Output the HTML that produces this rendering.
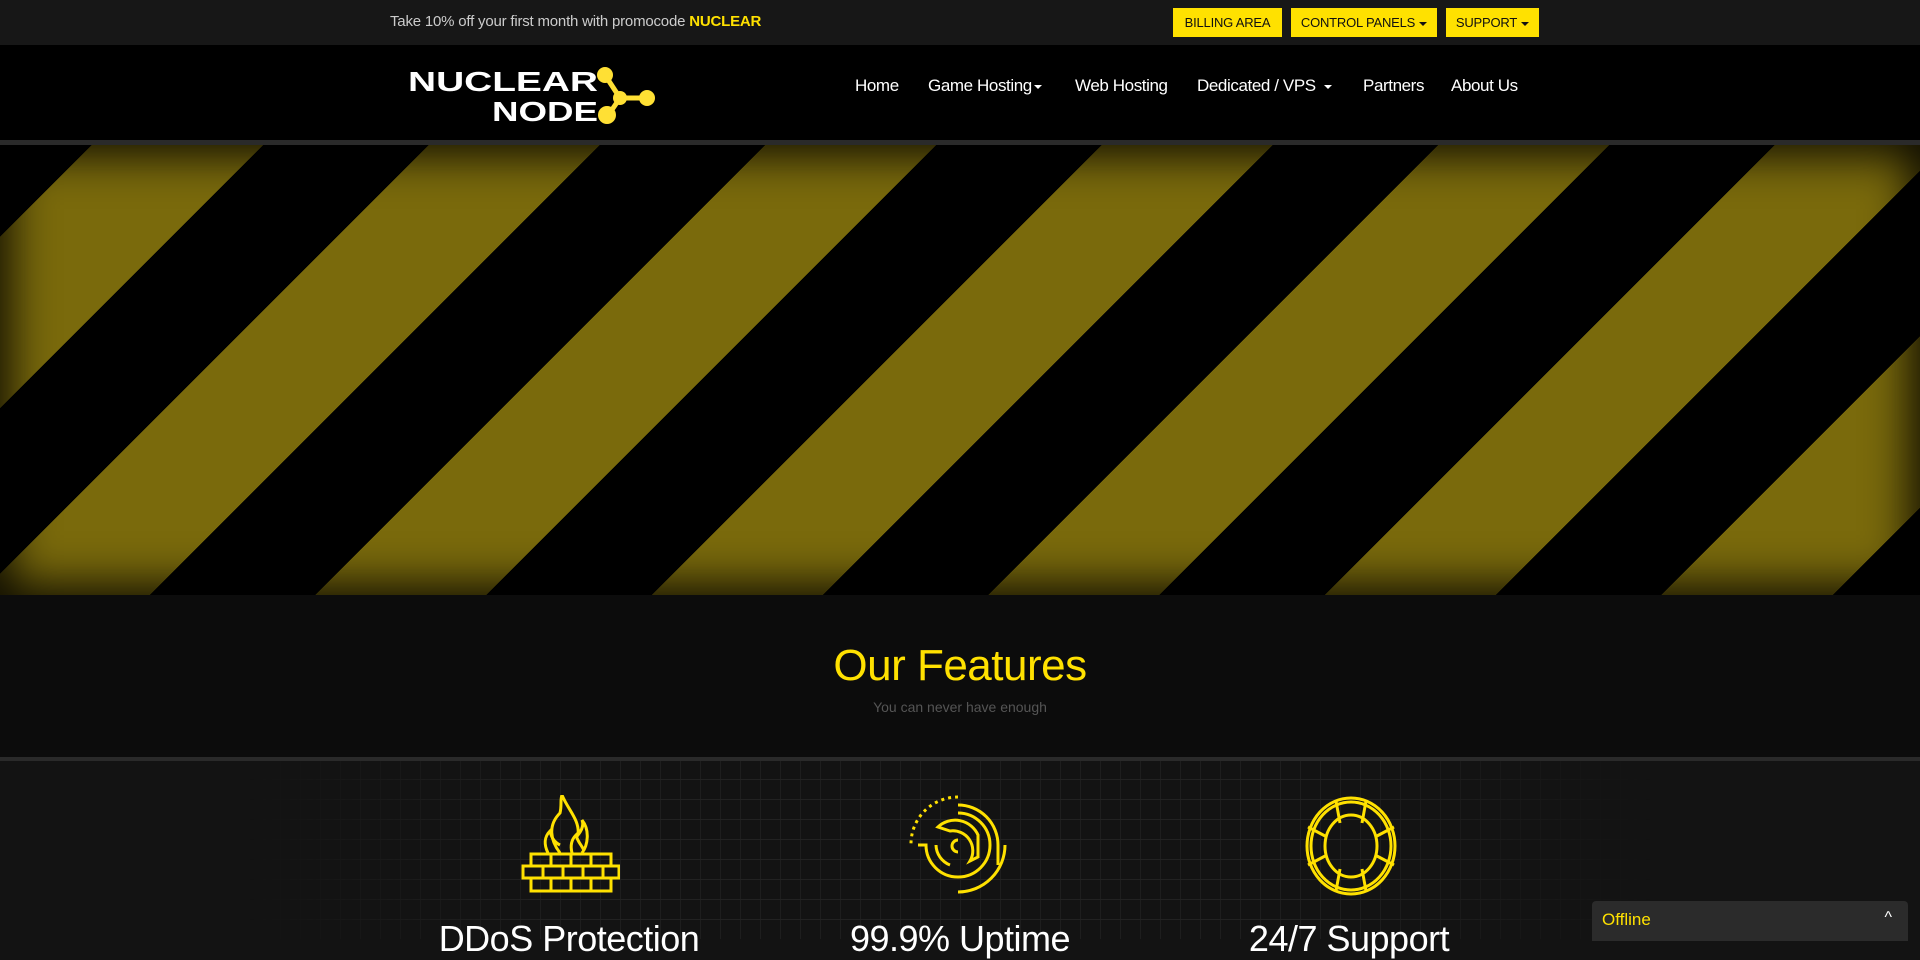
<!DOCTYPE html>
<html><head><meta charset="utf-8"><style>
*{margin:0;padding:0;box-sizing:border-box}
body{width:1920px;height:939px;overflow:hidden;background:#131313;font-family:"Liberation Sans",sans-serif;position:relative}
.top{position:absolute;left:0;top:0;width:1920px;height:45px;background:#171717}
.top .promo{position:absolute;left:390px;top:13px;color:#ccc;font-size:15px;letter-spacing:-0.2px}
.top .promo b{color:#ffe100}
.btn{position:absolute;top:8px;height:29px;background:#ffe100;color:#111;font-size:13px;line-height:29px;white-space:nowrap;text-align:center;letter-spacing:-0.2px}
.car{display:inline-block;width:0;height:0;border-left:4px solid transparent;border-right:4px solid transparent;border-top:4px solid currentColor;vertical-align:middle;margin-left:4px}
.hdr{position:absolute;left:0;top:45px;width:1920px;height:95px;background:#000}
.bar{position:absolute;left:0;top:140px;width:1920px;height:5px;background:#2a2a2a}
.nav a{position:absolute;top:31px;color:#fff;font-size:17px;text-decoration:none;letter-spacing:-0.4px;white-space:nowrap}
.hero{position:absolute;left:0;top:145px;width:1920px;height:450px;
background:repeating-linear-gradient(135deg,#000 0,#000 65px,#7a6a0c 65px,#7a6a0c 186px,#000 186px,#000 238px);}
.hero:after{content:"";position:absolute;inset:0;box-shadow:inset 0 0 45px 10px rgba(0,0,0,.9)}
.feat{position:absolute;left:0;top:595px;width:1920px;height:162px;background:#0c0c0c;text-align:center}
.feat h2{font-weight:normal;color:#ffe100;font-size:44px;margin-top:46px;letter-spacing:-0.5px}
.feat p{color:#555;font-size:14px;margin-top:8px}
.sep{position:absolute;left:0;top:757px;width:1920px;height:4px;background:#2a2a2a}
.grid{position:absolute;left:0;top:761px;width:1920px;height:178px;
background-image:linear-gradient(#222 1px,transparent 1px),linear-gradient(90deg,#1e1e1e 1px,transparent 1px);background-size:20px 20px;background-position:0 18px;
-webkit-mask-image:linear-gradient(90deg,transparent 250px,#000 550px,#000 1350px,transparent 1650px);mask-image:linear-gradient(90deg,transparent 250px,#000 550px,#000 1350px,transparent 1650px)}
.ttl{position:absolute;top:918px;color:#fff;font-size:36px;width:400px;text-align:center;letter-spacing:-0.5px;white-space:nowrap}
.off{position:absolute;left:1592px;top:901px;width:316px;height:40px;background:#2b2b2b;border-radius:4px 4px 0 0;color:#ffe100;font-size:17px;padding:9px 10px}
.off span{position:absolute;right:16px;top:8px;color:#fff;font-size:16px}
</style></head><body>
<div class="top">
<div class="promo">Take 10% off your first month with promocode <b>NUCLEAR</b></div>
<div class="btn" style="left:1173px;width:109px">BILLING AREA</div>
<div class="btn" style="left:1291px;width:146px">CONTROL PANELS<span class="car"></span></div>
<div class="btn" style="left:1446px;width:93px">SUPPORT<span class="car"></span></div>
</div>
<div class="hdr">
<svg style="position:absolute;left:405px;top:20px" width="260" height="60" viewBox="0 0 260 60">
<text x="3" y="26" fill="#fff" font-family="Liberation Sans" font-weight="bold" font-size="28" textLength="190" lengthAdjust="spacingAndGlyphs">NUCLEAR</text>
<text x="87" y="56" fill="#fff" font-family="Liberation Sans" font-weight="bold" font-size="28" textLength="106" lengthAdjust="spacingAndGlyphs">NODE</text>
<g stroke="#ffe034" stroke-width="5"><line x1="200" y1="10" x2="215" y2="33"/><line x1="215" y1="33" x2="240" y2="33"/><line x1="215" y1="33" x2="202" y2="52"/></g>
<g fill="#ffe034"><circle cx="200" cy="10" r="8"/><circle cx="215" cy="33" r="7"/><circle cx="242" cy="33" r="8"/><circle cx="202" cy="50" r="9"/></g>
</svg>
<div class="nav">
<a style="left:855px">Home</a>
<a style="left:928px">Game Hosting<span class="car" style="margin-left:2px"></span></a>
<a style="left:1075px">Web Hosting</a>
<a style="left:1197px">Dedicated / VPS <span class="car"></span></a>
<a style="left:1363px">Partners</a>
<a style="left:1451px">About Us</a>
</div>
</div>
<div class="bar"></div>
<div class="hero"></div>
<div class="feat"><h2>Our Features</h2><p>You can never have enough</p></div>
<div class="sep"></div>
<div class="grid"></div>
<svg style="position:absolute;left:520px;top:795px" width="100" height="102" viewBox="0 0 100 102" fill="none" stroke="#ffe100" stroke-width="3">
<path d="M40 58 C30 45 28 30 40 18 C42 10 40 5 42 0 C48 15 60 25 58 40 C62 35 64 30 62 25 C70 35 68 50 62 58"/>
<path d="M28 58 C24 50 24 42 30 36 C32 45 36 48 40 50"/>
<path d="M52 58 C50 50 52 44 56 40 C58 48 62 50 64 56"/>
<rect x="11" y="59" width="80" height="12"/><rect x="3" y="71" width="96" height="12"/><rect x="11" y="83" width="80" height="13"/>
<path d="M31 59v12M51 59v12M71 59v12M23 71v12M43 71v12M63 71v12M83 71v12M31 83v13M51 83v13M71 83v13"/>
</svg>
<svg style="position:absolute;left:908px;top:795px" width="104" height="102" viewBox="0 0 104 102" fill="none" stroke="#ffe100" stroke-width="3">
<path d="M50 2 A47 47 0 0 0 3 50" stroke-dasharray="3 4"/>
<path d="M50 10 A40 40 0 0 1 90 50 L90 70" />
<path d="M97 50 A47 47 0 0 1 50 97"/>
<path d="M10 50 L18 50 A32 32 0 0 0 50 82 A32 32 0 0 0 82 50 A32 32 0 0 0 50 18"/>
<path d="M30 32 A25 25 0 0 1 70 40 L70 62 L62 66 A20 20 0 0 0 42 36 Z"/>
<path d="M42 70 A22 22 0 0 1 28 50"/>
<path d="M50 45 A6 6 0 0 0 50 57"/>
</svg>
<svg style="position:absolute;left:1300px;top:795px" width="102" height="102" viewBox="0 0 102 102" fill="none" stroke="#ffe100" stroke-width="3">
<ellipse cx="51" cy="51" rx="44" ry="48"/><ellipse cx="51" cy="51" rx="40" ry="44"/>
<ellipse cx="51" cy="51" rx="26" ry="31"/>
<path d="M36 6l4 22M66 6l-4 22M36 96l4-22M66 96l-4-22M8 32l19 10M94 32l-19 10M8 70l19-10M94 70l-19-10"/>
</svg>
<div class="ttl" style="left:369px">DDoS Protection</div>
<div class="ttl" style="left:760px">99.9% Uptime</div>
<div class="ttl" style="left:1149px">24/7 Support</div>
<div class="off">Offline<span>&#94;</span></div>
</body></html>
